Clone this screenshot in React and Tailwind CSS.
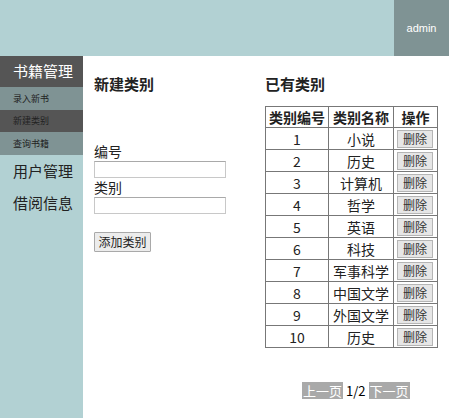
import React from 'react';

const cats = [
  [1, '小说'], [2, '历史'], [3, '计算机'], [4, '哲学'], [5, '英语'],
  [6, '科技'], [7, '军事科学'], [8, '中国文学'], [9, '外国文学'], [10, '历史'],
];

const cjk = { fontFamily: '"Noto Sans CJK SC", "Noto Sans", sans-serif' };

export default function App() {
  return (
    <div className="w-[449px] h-[418px] flex flex-col overflow-hidden bg-white text-[#222]" style={cjk}>
      <div className="h-[56px] bg-[#b2d1d3] flex justify-end shrink-0">
        <div className="w-[55px] bg-[#7f9394] flex items-center justify-center text-white text-[11px]" style={{ fontFamily: '"Liberation Sans", Arial, sans-serif' }}>
          admin
        </div>
      </div>

      <div className="flex flex-1">
        <div className="w-[83px] bg-[#b2d1d3] shrink-0">
          <div className="h-[31px] bg-[#555555] text-white text-[15px] flex items-center pl-[13px]">书籍管理</div>
          <div className="h-[23px] bg-[#7f9394] text-[9px] flex items-center pl-[13px]">录入新书</div>
          <div className="h-[22px] bg-[#555555] text-[9px] text-[#222] flex items-center pl-[13px]">新建类别</div>
          <div className="h-[23px] bg-[#7f9394] text-[9px] flex items-center pl-[13px]">查询书籍</div>
          <div className="h-[33px] text-[15px] flex items-center pl-[13px]">用户管理</div>
          <div className="h-[30px] text-[15px] flex items-center pl-[13px]">借阅信息</div>
        </div>

        <div className="flex-1 flex">
          <div className="w-[182px] pl-[11px] pt-[17px]">
            <div className="text-[15px] font-bold leading-[22px]">新建类别</div>
            <div className="mt-[46px] text-[14px] leading-[20px]">编号</div>
            <input className="block w-[132px] h-[17px] border border-[#c8c8c8] border-t-[#a9a9a9] bg-white" />
            <div className="text-[14px] leading-[19px]">类别</div>
            <input className="block w-[132px] h-[17px] border border-[#c8c8c8] border-t-[#a9a9a9] bg-white" />
            <button className="mt-[18px] h-[20px] w-[57px] border border-[#a9a9a9] bg-[#ececec] text-[12px] leading-[18px] rounded-[1px] text-[#222]">
              添加类别
            </button>
          </div>

          <div className="flex-1 pt-[17px]">
            <div className="text-[15px] font-bold leading-[22px]">已有类别</div>
            <table className="mt-[11px] border-collapse border border-[#555] text-[14px] text-center">
              <thead>
                <tr className="h-[21px] leading-[18px]">
                  <th className="border border-[#777] w-[63px] font-bold p-0">类别编号</th>
                  <th className="border border-[#777] w-[65px] font-bold p-0">类别名称</th>
                  <th className="border border-[#777] w-[44px] font-bold p-0">操作</th>
                </tr>
              </thead>
              <tbody>
                {cats.map(([id, name]) => (
                  <tr key={id} className="h-[22px]">
                    <td className="border border-[#777] p-0 leading-[20px]">{id}</td>
                    <td className="border border-[#777] p-0 leading-[20px]">{name}</td>
                    <td className="border border-[#777] p-0 px-[3px]">
                      <button className="block w-[36px] h-[18px] border border-[#b5b5b5] bg-[#e6e6e6] text-[12px] leading-[16px] text-[#333]">
                        删除
                      </button>
                    </td>
                  </tr>
                ))}
              </tbody>
            </table>
            <div className="mt-[34px] ml-[37px] flex items-center text-[13px] leading-[17px]">
              <span className="bg-[#a9a9a9] text-white px-[1px]">上一页</span>
              <span className="px-[3px] text-black">1/2</span>
              <span className="bg-[#a9a9a9] text-white px-[1px]">下一页</span>
            </div>
          </div>
        </div>
      </div>
    </div>
  );
}
